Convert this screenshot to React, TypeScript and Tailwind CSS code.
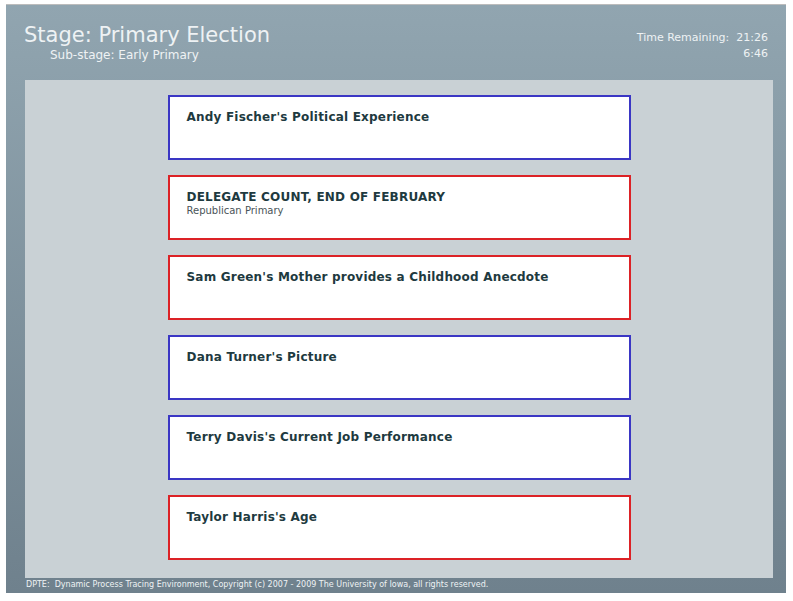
const cards = [
  { title: "Andy Fischer's Political Experience", color: "blue" },
  { title: "DELEGATE COUNT, END OF FEBRUARY", sub: "Republican Primary", color: "red" },
  { title: "Sam Green's Mother provides a Childhood Anecdote", color: "red" },
  { title: "Dana Turner's Picture", color: "blue" },
  { title: "Terry Davis's Current Job Performance", color: "blue" },
  { title: "Taylor Harris's Age", color: "red" },
];

export default function App() {
  return (
    <div className="w-[793px] h-[601px] bg-white pt-[4px] pl-[6px] font-['DejaVu_Sans',Verdana,sans-serif]">
      <div className="w-[780px] h-[589px] border-t border-[#bcbcbc] bg-gradient-to-b from-[#91a5b0] to-[#6f818d] flex flex-col">
        {/* Header */}
        <div className="h-[75px] flex justify-between pl-[18px] pr-[18px] pt-[17px]">
          <div className="text-[#eef2f4]">
            <div className="text-[21px] leading-[26px]">Stage: Primary Election</div>
            <div className="text-[12px] leading-[14px] pl-[26px]">Sub-stage: Early Primary</div>
          </div>
          <div className="text-[#eef2f4] text-[11px] leading-[16px] text-right pt-[8px]">
            <div>Time Remaining:&nbsp; 21:26</div>
            <div>6:46</div>
          </div>
        </div>

        {/* Item list */}
        <div className="ml-[19px] w-[748px] h-[498px] bg-[#c9d1d5] flex flex-col items-center gap-[15px] pt-[15px]">
          {cards.map((c) => (
            <div
              key={c.title}
              className={
                "w-[463px] h-[65px] bg-white border-2 px-[17px] pt-[12px] " +
                (c.color === "blue" ? "border-[#3a36c4]" : "border-[#dc2226]")
              }
            >
              <div className="text-[12px] font-bold tracking-[0.2px] text-[#1e3a40] leading-[16px]">{c.title}</div>
              {c.sub && <div className="text-[10px] text-[#4a5458] leading-[12px]">{c.sub}</div>}
            </div>
          ))}
        </div>

        {/* Footer */}
        <div className="pl-[20px] pt-[2px] text-[8px] leading-[10px] text-[#eef2f4]">
          DPTE:&nbsp; Dynamic Process Tracing Environment, Copyright (c) 2007 - 2009 The University of Iowa, all rights reserved.
        </div>
      </div>
    </div>
  );
}
